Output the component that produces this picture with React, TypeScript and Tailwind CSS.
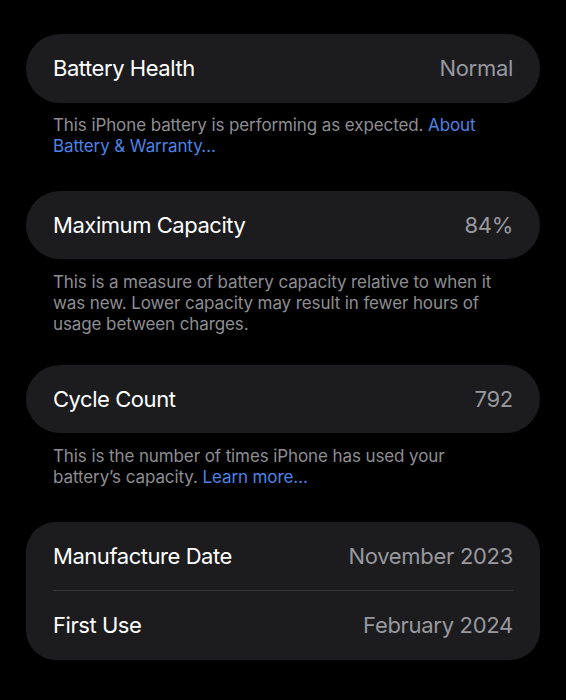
import React from "react";

const font = { fontFamily: "Inter, 'Noto Sans', sans-serif" };

function Row({ label, value, h = "h-[68px]" }: { label: string; value: string; h?: string }) {
  return (
    <div className={`flex ${h} items-center justify-between px-[27px]`}>
      <span className="text-[22px] text-white tracking-[-0.45px]">{label}</span>
      <span className="text-[22px] text-[#98989f] tracking-[-0.3px]">{value}</span>
    </div>
  );
}

export default function App() {
  return (
    <div className="min-h-[700px] w-[566px] bg-black pt-[34px]" style={font}>
      <div className="mx-[26px] flex flex-col">
        <div className="rounded-[34px] bg-[#1c1c1e]">
          <Row label="Battery Health" value="Normal" h="h-[69px]" />
        </div>
        <p className="mt-[12px] px-[27px] text-[17px] leading-[21px] tracking-[-0.1px] text-[#8e8e93]">
          This iPhone battery is performing as expected.{" "}
          <span className="text-[#4b83e6]">About Battery &amp; Warranty…</span>
        </p>

        <div className="mt-[34px] rounded-[34px] bg-[#1c1c1e]">
          <Row label="Maximum Capacity" value="84%" />
        </div>
        <p className="mt-[13px] px-[27px] text-[17px] leading-[21px] tracking-[-0.1px] text-[#8e8e93]">
          This is a measure of battery capacity relative to when it was new. Lower capacity may result in fewer hours of usage between charges.
        </p>

        <div className="mt-[30px] rounded-[34px] bg-[#1c1c1e]">
          <Row label="Cycle Count" value="792" />
        </div>
        <p className="mt-[13px] px-[27px] text-[17px] leading-[21px] tracking-[-0.1px] text-[#8e8e93]">
          This is the number of times iPhone has used your battery’s capacity.{" "}
          <span className="text-[#4b83e6]">Learn more…</span>
        </p>

        <div className="mt-[34px] rounded-[30px] bg-[#1c1c1e]">
          <Row label="Manufacture Date" value="November 2023" />
          <div className="mx-[27px] h-px bg-[#38383a]" />
          <Row label="First Use" value="February 2024" h="h-[69px]" />
        </div>
      </div>
    </div>
  );
}
